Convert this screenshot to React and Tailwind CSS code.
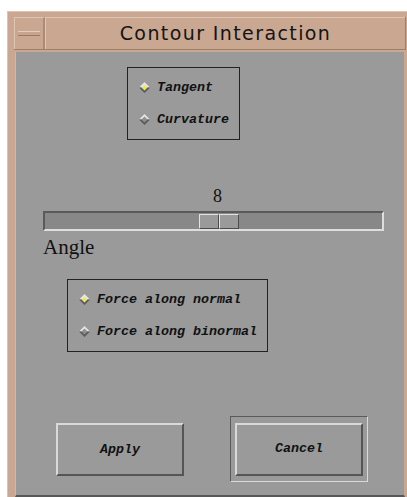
import React from 'react';

// diamond radio toggle, raised look; selected one has a yellow dot
function Diamond({ on }) {
  return (
    <svg width="11" height="11" viewBox="0 0 11 11" className="shrink-0">
      <polygon points="5.5,0 11,5.5 5.5,11 0,5.5" fill="#8a8a8a" />
      <polygon points="5.5,0 11,5.5 0,5.5" fill="#e6e6e6" />
      <polygon points="0,5.5 11,5.5 5.5,11" fill="#5c5c5c" />
      <polygon points="5.5,2.5 8.5,5.5 5.5,8.5 2.5,5.5" fill={on ? '#e8e4a0' : '#8f8f8f'} />
      {on && <circle cx="5.5" cy="5.5" r="1.3" fill="#f4f000" />}
    </svg>
  );
}

function RadioBox({ items, className }) {
  return (
    <div className={`flex flex-col gap-[17px] border border-[#222] pt-[12px] pb-[12px] pl-[11px] h-[73px] ${className}`}>
      {items.map((it, i) => (
        <div key={it} className="flex items-center h-[16px] gap-[7px]">
          <Diamond on={i === 0} />
          <span className="font-['Liberation_Mono',monospace] font-bold italic text-[13.33px] leading-none text-[#111]">
            {it}
          </span>
        </div>
      ))}
    </div>
  );
}

function BevelButton({ children }) {
  return (
    <button className="w-[128px] h-[53px] bg-[#9a9a9a] border-2 border-t-[#d9d9d9] border-l-[#d9d9d9] border-b-[#555] border-r-[#555] flex items-center justify-center">
      <span className="font-['Liberation_Mono',monospace] font-bold italic text-[13.33px] leading-none text-[#111]">
        {children}
      </span>
    </button>
  );
}

export default function App() {
  return (
    <div className="w-[407px] h-[497px] bg-white overflow-hidden pt-[11px] pl-[7px]">
      {/* window frame */}
      <div className="w-[410px] h-[500px] bg-[#c9a790] border-t border-l border-[#dfc3b0] pt-[5px] pl-[6px] flex flex-col">
        {/* title bar */}
        <div className="flex h-[33px] w-[392px] border-b border-r border-[#9c7f6b]">
          <div className="w-[31px] h-full border-t border-l border-[#e0c5b2] border-r-2 border-r-[#a98b77] flex items-center justify-center">
            <div className="w-[22px] h-[5px] bg-[#c6a48d] border-t border-[#e6ccbb] border-b border-b-[#98796a]" />
          </div>
          <div className="flex-1 flex items-center justify-center border-t border-l border-[#e0c5b2]">
            <span className="font-['DejaVu_Sans',sans-serif] text-[19px] tracking-[1.4px] text-[#141414] leading-none">
              Contour Interaction
            </span>
          </div>
        </div>

        {/* content */}
        <div className="mt-[2px] ml-[1px] w-[390px] h-[445px] bg-[#9a9a9a] border-l border-[#bdbdbd] border-b-2 border-b-[#585858] border-r border-r-[#c9a790] flex flex-col">
          <RadioBox items={['Tangent', 'Curvature']} className="mt-[15px] ml-[111px] w-[113px]" />

          {/* slider */}
          <div className="mt-[47px] ml-[27px] w-[341px] flex flex-col">
            <div className="h-[21px] pl-[170px] font-['Liberation_Serif',serif] text-[18px] leading-none text-[#111]">8</div>
            <div className="mt-[3px] h-[20px] bg-[#888888] border-2 border-t-[#5a5a5a] border-l-[#5a5a5a] border-b-[#dedede] border-r-[#dedede] flex items-center">
              <div className="ml-[154px] w-[40px] h-[15px] flex">
                <div className="w-[20px] h-full bg-[#9a9a9a] border border-t-[#e2e2e2] border-l-[#e2e2e2] border-b-[#4d4d4d] border-r-[#4d4d4d]" />
                <div className="w-[20px] h-full bg-[#9a9a9a] border border-t-[#e2e2e2] border-l-[#e2e2e2] border-b-[#4d4d4d] border-r-[#4d4d4d]" />
              </div>
            </div>
            <div className="mt-[4px] font-['Liberation_Serif',serif] text-[21px] leading-[24px] text-[#111]">Angle</div>
          </div>

          <RadioBox
            items={['Force along normal', 'Force along binormal']}
            className="mt-[20px] ml-[51px] w-[201px]"
          />

          {/* buttons */}
          <div className="mt-[64px] flex items-start">
            <div className="ml-[40px] mt-[7px]">
              <BevelButton>Apply</BevelButton>
            </div>
            <div className="ml-[46px] w-[138px] h-[66px] border border-t-[#5a5a5a] border-l-[#5a5a5a] border-b-[#dadada] border-r-[#dadada] flex items-center justify-center">
              <BevelButton>Cancel</BevelButton>
            </div>
          </div>
        </div>
      </div>
    </div>
  );
}
